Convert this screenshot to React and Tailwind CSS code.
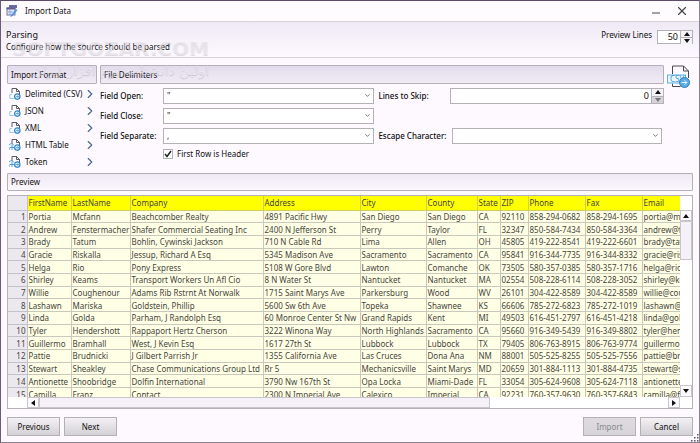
import { ChevronDown, ChevronRight, Minus, X } from 'lucide-react'
import { clsx } from 'clsx'

const FORMATS = ['Delimited (CSV)', 'JSON', 'XML', 'HTML Table', 'Token']

const COLUMNS = [
  { name: 'FirstName', width: 'w-[44px]' },
  { name: 'LastName', width: 'w-[59px]' },
  { name: 'Company', width: 'w-[133px]' },
  { name: 'Address', width: 'w-[97px]' },
  { name: 'City', width: 'w-[66px]' },
  { name: 'County', width: 'w-[51px]' },
  { name: 'State', width: 'w-[23px]' },
  { name: 'ZIP', width: 'w-[28px]' },
  { name: 'Phone', width: 'w-[57px]' },
  { name: 'Fax', width: 'w-[57px]' },
  { name: 'Email', width: 'w-[120px]' },
]

const ROWS = [
  ['Portia', 'Mcfann', 'Beachcomber Realty', '4891 Pacific Hwy', 'San Diego', 'San Diego', 'CA', '92110', '858-294-0682', '858-294-1695', 'portia@mcfann.com'],
  ['Andrew', 'Fenstermacher', 'Shafer Commercial Seating Inc', '2400 N Jefferson St', 'Perry', 'Taylor', 'FL', '32347', '850-584-7434', '850-584-3364', 'andrew@fenstermacher.com'],
  ['Brady', 'Tatum', 'Bohlin, Cywinski Jackson', '710 N Cable Rd', 'Lima', 'Allen', 'OH', '45805', '419-222-8541', '419-222-6601', 'brady@tatum.com'],
  ['Gracie', 'Riskalla', 'Jessup, Richard A Esq', '5345 Madison Ave', 'Sacramento', 'Sacramento', 'CA', '95841', '916-344-7735', '916-344-8332', 'gracie@riskalla.com'],
  ['Helga', 'Rio', 'Pony Express', '5108 W Gore Blvd', 'Lawton', 'Comanche', 'OK', '73505', '580-357-0385', '580-357-1716', 'helga@rio.com'],
  ['Shirley', 'Keams', 'Transport Workers Un Afl Cio', '8 N Water St', 'Nantucket', 'Nantucket', 'MA', '02554', '508-228-6114', '508-228-3052', 'shirley@keams.com'],
  ['Willie', 'Coughenour', 'Adams Rib Rstrnt At Norwalk', '1715 Saint Marys Ave', 'Parkersburg', 'Wood', 'WV', '26101', '304-422-8589', '304-422-8589', 'willie@coughenour.com'],
  ['Lashawn', 'Mariska', 'Goldstein, Phillip', '5600 Sw 6th Ave', 'Topeka', 'Shawnee', 'KS', '66606', '785-272-6823', '785-272-1019', 'lashawn@mariska.com'],
  ['Linda', 'Golda', 'Parham, J Randolph Esq', '60 Monroe Center St Nw', 'Grand Rapids', 'Kent', 'MI', '49503', '616-451-2797', '616-451-4218', 'linda@golda.com'],
  ['Tyler', 'Hendershott', 'Rappaport Hertz Cherson', '3222 Winona Way', 'North Highlands', 'Sacramento', 'CA', '95660', '916-349-5439', '916-349-8802', 'tyler@hendershott.com'],
  ['Guillermo', 'Bramhall', 'West, J Kevin Esq', '1617 27th St', 'Lubbock', 'Lubbock', 'TX', '79405', '806-763-8915', '806-763-9774', 'guillermo@bramhall.com'],
  ['Pattie', 'Brudnicki', 'J Gilbert Parrish Jr', '1355 California Ave', 'Las Cruces', 'Dona Ana', 'NM', '88001', '505-525-8255', '505-525-7556', 'pattie@brudnicki.com'],
  ['Stewart', 'Sheakley', 'Chase Communications Group Ltd', 'Rr 5', 'Mechanicsville', 'Saint Marys', 'MD', '20659', '301-884-1113', '301-884-4735', 'stewart@sheakley.com'],
  ['Antionette', 'Shoobridge', 'Dolfin International', '3790 Nw 167th St', 'Opa Locka', 'Miami-Dade', 'FL', '33054', '305-624-9608', '305-624-7118', 'antionette@shoobridge.com'],
  ['Camilla', 'Franz', 'Contact', '2300 N Imperial Ave', 'Calexico', 'Imperial', 'CA', '92231', '760-357-9630', '760-357-6843', 'camilla@franz.com'],
]

function AppIcon() {
  return (
    <svg viewBox="0 0 12 12" className="size-3 shrink-0" aria-hidden="true">
      <rect x="3" y="0" width="8" height="3" fill="#6a6a9c" />
      <rect x="1" y="3" width="8" height="7" fill="#e4eaf8" stroke="#7474a4" />
      <rect x="0.5" y="2.5" width="9" height="2" fill="#5f5f94" />
      <path d="M2 7h5M4 5v5" stroke="#8fa6d8" strokeWidth="1" />
      <path d="M4 11.500 10 4l1.500 1.200L6 11.500z" fill="#4f93dc" />
    </svg>
  )
}

function FormatIcon({ label }) {
  const round = label === 'HTML Table' || label === 'Token'
  return (
    <svg viewBox="0 0 12 12" className="size-3 shrink-0" fill="none" aria-hidden="true">
      <path d="M3 5V.5h4.5L10.500 3.500V6M7.500.5v3h3" stroke="#4a4a52" strokeWidth="0.9" />
      {round ? (
        <path d="M1 10.500a3 3 0 1 1 4-4M.5 8.500h5M3 6v5" stroke="#3d9ad6" strokeWidth="0.9" />
      ) : (
        <path d="M.8 6.500v4h4M.8 6.500h2" stroke="#8cc4ea" strokeWidth="0.9" />
      )}
      <circle cx="8.300" cy="8.600" r="2.700" fill="#e6f3fc" stroke="#2f86cb" strokeWidth="1.200" />
      <path d="M6.800 8.600h3M8.600 7.400l1.200 1.200-1.200 1.200" stroke="#2f86cb" strokeWidth="0.700" />
    </svg>
  )
}

function CsvIcon() {
  return (
    <svg viewBox="0 0 24 24" className="size-6" fill="none" aria-hidden="true">
      <path d="M5.500 9V1h11l5 5v7M5.500 18.500v3h8" stroke="#4a4a52" />
      <path d="M16.500 1v5h5" stroke="#4a4a52" />
      <rect x="0.500" y="10" width="18" height="8" fill="#eaf6fd" stroke="#5fb2e4" />
      <text x="3" y="17" fontSize="8" fill="#3d9ad6">CSV</text>
      <circle cx="17.500" cy="17.500" r="5" fill="#5aa9e2" stroke="#2d7fc2" />
      <path d="M14.500 17.500h5M17.500 15.200l2.300 2.300-2.300 2.300" stroke="#e9f5fd" />
    </svg>
  )
}

const TRIANGLES = {
  up: 'M0 5 3 1l3 4z',
  down: 'M0 1h6L3 5z',
  left: 'M5 0v6L1 3z',
  right: 'M1 0v6l4-3z',
}

function Triangle({ direction }) {
  return (
    <svg viewBox="0 0 6 6" className="size-[6px]" fill="currentColor" aria-hidden="true">
      <path d={TRIANGLES[direction]} />
    </svg>
  )
}

function SectionTitle({ children, className }) {
  return (
    <h2
      className={clsx('flex items-center rounded-[1px] border border-[#b4afba] bg-linear-to-b px-[3px]', className)}
    >
      {children}
    </h2>
  )
}

function Combo({ id, value }) {
  return (
    <div className="relative h-4 min-w-0 flex-1">
      <select
        id={id}
        defaultValue={value}
        className="block h-4 w-full appearance-none border border-[#b4b1b8] bg-white px-[3px] leading-3"
      >
        <option>{value}</option>
      </select>
      <ChevronDown className="pointer-events-none absolute top-1 right-[3px] size-[7px] text-[#666]" strokeWidth={3} />
    </div>
  )
}

function Spinner({ id, value, className, downDisabled }) {
  return (
    <div className={clsx('flex border border-[#b4b1b8] bg-white', className)}>
      <input id={id} defaultValue={value} className="min-w-0 flex-1 bg-transparent pr-[2px] text-right text-[9px] outline-none" />
      <div className="flex w-3 flex-col border-l border-[#b4b1b8]">
        <button type="button" aria-label="Increase" className="flex flex-1 items-center justify-center border-b border-[#b4b1b8] bg-[#f6f3f8]">
          <Triangle direction="up" />
        </button>
        <button
          type="button"
          aria-label="Decrease"
          className={clsx('flex flex-1 items-center justify-center', downDisabled ? 'bg-[#d6d3d8] text-[#777]' : 'bg-[#f6f3f8]')}
        >
          <Triangle direction="down" />
        </button>
      </div>
    </div>
  )
}

function PreviewTable() {
  return (
    <table className="h-[205px] w-[754px] table-fixed border-collapse leading-[11px] text-[#46463c]">
      <thead>
        <tr className="h-[14px] bg-[#ffff00] text-left">
          <th aria-label="Row" className="w-[19px] border-r border-b border-[#c4c1c8] bg-[#ece8ef]" />
          {COLUMNS.map((col) => (
            <th
              key={col.name}
              className={clsx('border-r border-b border-[#cfcf60] p-0 pl-px font-normal whitespace-nowrap', col.width)}
            >
              {col.name}
            </th>
          ))}
        </tr>
      </thead>
      <tbody>
        {ROWS.map((row, i) => (
          <tr key={row[0]}>
            <th className="border-r border-b border-[#c4c1c8] bg-[#ece8ef] p-0 pr-px text-right font-normal">{i + 1}</th>
            {row.map((cell, j) => (
              <td
                key={COLUMNS[j].name}
                className="border-r border-b border-[#c8c8bc] bg-[#ffffe6] p-0 pl-px whitespace-nowrap"
              >
                {cell}
              </td>
            ))}
          </tr>
        ))}
      </tbody>
    </table>
  )
}

function ScrollButton({ direction, className }) {
  return (
    <button
      type="button"
      aria-label={`Scroll ${direction}`}
      className={clsx('flex shrink-0 items-center justify-center border border-[#c9c5cd] bg-[#fdfbfe]', className)}
    >
      <Triangle direction={direction} />
    </button>
  )
}

function PushButton({ children, disabled }) {
  return (
    <button
      type="button"
      disabled={disabled}
      className="h-[19px] w-[53px] border border-[#b3b0b6] bg-linear-to-b from-[#f3f1f4] to-[#d3d1d5] leading-4 disabled:from-[#dedce0] disabled:to-[#d6d4d8] disabled:text-[#8b888e]"
    >
      {children}
    </button>
  )
}

function Watermark() {
  return (
    <div
      aria-hidden="true"
      className="pointer-events-none absolute top-[37px] left-[11px] font-['DejaVu_Sans',sans-serif] text-white/40 [text-shadow:0_1px_1px_rgb(120_110_130/0.25)]"
    >
      <p className="text-[20px] leading-5 font-bold">SOFTGOZAR.COM</p>
      <p dir="rtl" lang="fa" className="pt-[2px] text-[14px] leading-5">اولین دانشنامه نرم افزار ایران</p>
    </div>
  )
}

function ResizeGrip() {
  return (
    <svg viewBox="0 0 8 8" className="absolute right-0 bottom-0 size-2" fill="#5d5365" aria-hidden="true">
      <path d="M6 0h1.500v1.500H6zM3 3h1.500v1.500H3zM6 3h1.500v1.500H6zM0 6h1.500v1.500H0zM3 6h1.500v1.500H3zM6 6h1.500v1.500H6z" />
    </svg>
  )
}

export default function App() {
  return (
    <div className="relative flex min-h-screen flex-col border border-[#8b8292] border-t-[#5d4a66] border-l-[#6d5a78] bg-[#fdf9ff] font-['Noto_Sans',sans-serif] text-[8px] leading-3 text-[#111]">
      <div className="flex h-[21px] items-center border-b border-[#d6d2da] bg-[#fefcff] pr-[10px] pl-[5px]">
        <AppIcon />
        <h1 className="ml-[7px] flex-1">Import Data</h1>
        <button type="button" aria-label="Minimize" className="mr-[13px] pt-1">
          <Minus className="size-3 text-[#444]" strokeWidth={2} />
        </button>
        <button type="button" aria-label="Close">
          <X className="size-[14px] text-[#444]" strokeWidth={2} />
        </button>
      </div>

      <header className="flex h-9 items-start border-b border-[#d6d2da] bg-linear-to-b from-[#efe9f5] to-[#fdf9ff] pr-[6px] pl-[5px]">
        <div className="flex-1 pt-[7px]">
          <p className="text-[9px]">Parsing</p>
          <p>Configure how the source should be parsed</p>
        </div>
        <label htmlFor="preview-lines" className="pt-[7px] pr-[5px]">
          Preview Lines
        </label>
        <Spinner id="preview-lines" value="50" className="mt-2 h-[14px] w-9" />
      </header>

      <main className="flex flex-1 flex-col px-[6px] pt-[7px]">
        <div className="flex gap-[3px]">
          <section className="w-[90px] shrink-0">
            <SectionTitle className="h-[19px] from-[#e3dbeb] to-[#f1ebf6]">Import Format</SectionTitle>
            <ul className="pt-[1px]">
              {FORMATS.map((label) => (
                <li key={label}>
                  <button type="button" className="flex h-[17px] w-full items-center pl-[2px] text-left">
                    <FormatIcon label={label} />
                    <span className="ml-1 flex-1 whitespace-nowrap">{label}</span>
                    <ChevronRight className="size-[14px] text-[#4a6b96]" strokeWidth={2} />
                  </button>
                </li>
              ))}
            </ul>
          </section>

          <section className="min-w-0 flex-1">
            <SectionTitle className="h-[19px] from-[#e3dbeb] to-[#f1ebf6]">File Delimiters</SectionTitle>
            <div className="grid grid-cols-[49fr_51fr] gap-1 pt-1">
              <div className="flex flex-col gap-1">
                <div className="flex items-center">
                  <label htmlFor="field-open" className="w-[63px] font-medium">Field Open:</label>
                  <Combo id="field-open" value={'"'} />
                </div>
                <div className="flex items-center">
                  <label htmlFor="field-close" className="w-[63px] font-medium">Field Close:</label>
                  <Combo id="field-close" value={'"'} />
                </div>
                <div className="flex items-center">
                  <label htmlFor="field-separate" className="w-[63px] font-medium">Field Separate:</label>
                  <Combo id="field-separate" value="," />
                </div>
                <label className="flex h-3 items-center gap-1 pl-[63px]">
                  <input type="checkbox" defaultChecked className="peer sr-only" />
                  <span className="flex size-[10px] items-center justify-center border border-[#b4b1b8] bg-white">
                    <svg viewBox="0 0 8 8" className="size-2" fill="none" aria-hidden="true">
                      <path d="M1 4l2 2.500L7 1" stroke="#222" strokeWidth="1.500" />
                    </svg>
                  </span>
                  First Row is Header
                </label>
              </div>
              <div className="flex flex-col gap-6">
                <div className="flex items-center">
                  <label htmlFor="skip" className="w-[72px] font-medium">Lines to Skip:</label>
                  <Spinner id="skip" value="0" className="h-4 flex-1" downDisabled />
                </div>
                <div className="flex items-center pr-[2px]">
                  <label htmlFor="escape" className="w-[74px] font-medium whitespace-nowrap">Escape Character:</label>
                  <Combo id="escape" value="" />
                </div>
              </div>
            </div>
          </section>
          <div className="w-[26px] shrink-0">
            <CsvIcon />
          </div>
        </div>

        <SectionTitle className="mt-[3px] h-[18px] from-[#f0e9f5] to-[#fbf7fd]">Preview</SectionTitle>

        <section className="mt-1 border border-[#b4b1b8] bg-white">
          <div className="flex h-[201px]">
            <div className="min-w-0 flex-1 overflow-hidden">
              <PreviewTable />
            </div>
            <div className="flex w-3 flex-col pt-[14px]">
              <ScrollButton direction="up" className="h-[11px]" />
              <div className="h-[39px] border border-[#c9c5cd] bg-[#f6f0f8]" />
              <div className="flex-1" />
              <ScrollButton direction="down" className="h-3" />
            </div>
          </div>
          <div className="flex h-[11px] pr-3 pl-[19px]">
            <ScrollButton direction="left" className="w-3" />
            <div className="w-[69%] border border-[#c9c5cd] bg-[#f6f0f8]" />
            <div className="flex-1" />
            <ScrollButton direction="right" className="w-3" />
          </div>
        </section>

        <footer className="flex gap-1 pt-2">
          <PushButton>Previous</PushButton>
          <PushButton>Next</PushButton>
          <div className="flex-1" />
          <PushButton disabled>Import</PushButton>
          <PushButton>Cancel</PushButton>
        </footer>
      </main>
      <Watermark />
      <ResizeGrip />
    </div>
  )
}
